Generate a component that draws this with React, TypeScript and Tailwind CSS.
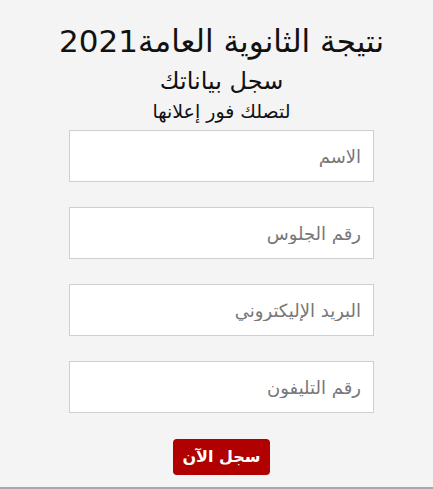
export default function App() {
  const fields = ["الاسم", "رقم الجلوس", "البريد الإليكتروني", "رقم التليفون"];
  return (
    <div
      dir="rtl"
      className="w-[433px] h-[489px] bg-[#f4f4f4] border-b-2 border-[#a8a8a8] flex flex-col items-center pl-[10px]"
      style={{ fontFamily: '"DejaVu Sans", "Noto Sans", sans-serif' }}
    >
      <h1 className="mt-[21px] text-[31px] leading-[40px] font-medium text-[#111]">
        نتيجة الثانوية العامة2021
      </h1>
      <h2 className="mt-[4px] text-[24px] leading-[32px] text-[#111]">سجل بياناتك</h2>
      <p className="mt-[1px] text-[19px] leading-[26px] text-[#111]">لتصلك فور إعلانها</p>
      <form className="mt-[6px] flex flex-col items-center">
        {fields.map((f) => (
          <input
            key={f}
            placeholder={f}
            className="w-[305px] h-[52px] mb-[25px] bg-white border border-[#cfcfcf] px-[12px] text-[18px] text-right placeholder:text-[#777] outline-none"
          />
        ))}
        <button
          type="button"
          className="mt-[1px] w-[97px] h-[36px] rounded-[4px] bg-[#b00000] text-white text-[16px] font-bold"
        >
          سجل الآن
        </button>
      </form>
    </div>
  );
}
